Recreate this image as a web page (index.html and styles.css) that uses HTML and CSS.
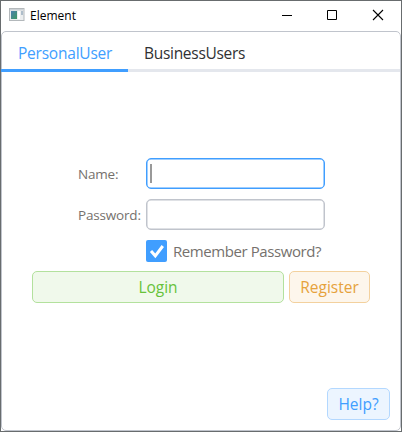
FILE: index.html
```
<!DOCTYPE html>
<html lang="en">
<head>
<meta charset="utf-8">
<title>Element</title>
<link rel="stylesheet" href="styles.css">
</head>
<body>
<div class="window">
  <header class="titlebar">
    <svg class="app-icon" width="16" height="14" viewBox="0 0 16 14">
      <defs>
        <linearGradient id="pane" x1="0" y1="0" x2="1" y2="1"><stop offset="0" stop-color="#4d7fb0"/><stop offset="1" stop-color="#3f9a62"/></linearGradient>
      </defs>
      <rect x=".5" y=".5" width="14.500" height="12" fill="#eceeef" stroke="#b3b8bb"/>
      <rect x="1" y="1" width="14" height="1.5" fill="#cdd2d6"/>
      <rect x="2" y="3" width="6" height="8" fill="url(#pane)"/>
      <rect x="9" y="3" width="2" height="8" fill="#fff"/>
      <rect x="12" y="3" width="2" height="4" fill="#aebdca"/>
    </svg>
    <span class="title">Element</span>
    <svg class="controls" width="102" height="12" viewBox="0 0 102 12">
      <path d="M0 6.500h10M45.500 1.500h9v9h-9z" fill="none" stroke="#000"/>
      <path d="M91 1l10 10M101 1l-10 10" fill="none" stroke="#000" stroke-width="1.1"/>
    </svg>
  </header>
  <main class="panel">
    <nav class="tabs">
      <a class="tab tab-active"><span class="t-personal">PersonalUser</span></a>
      <a class="tab"><span class="t-business">BusinessUsers</span></a>
    </nav>
    <form class="form">
      <div class="field"><label class="label t-name">Name:</label><div class="input input-focus"><i class="caret"></i></div></div>
      <div class="field"><label class="label t-pass">Password:</label><div class="input"></div></div>
      <div class="remember">
        <svg class="check" width="21" height="22" viewBox="0 0 21 22"><rect width="21" height="22" rx="2" fill="#409eff"/><path d="M5 11l4.300 4.800L16.800 6" fill="none" stroke="#fff" stroke-width="3"/></svg>
        <span class="t-remember">Remember Password?</span>
      </div>
      <div class="actions">
        <div class="button login"><span class="t-login">Login</span></div>
        <div class="button register"><span class="t-register">Register</span></div>
      </div>
    </form>
    <footer class="footer"><div class="button help"><span class="t-help">Help?</span></div></footer>
  </main>
</div>
</body>
</html>
```
FILE: styles.css
```
* { box-sizing: border-box; }
body { margin: 0; font-family: "Open Sans", "Noto Sans", sans-serif; font-size: 15.5px; color: #75716d; }
.window { width: 402px; height: 432px; border: 1px solid #686c6e; background: #fff; display: flex; flex-direction: column; overflow: hidden; }
span, label { white-space: nowrap; }
.titlebar { height: 30px; flex: none; display: flex; align-items: center; padding: 0 17px 2px 8px; }
.title { margin: 2px 0 0 5px; font-size: 12px; line-height: 16px; color: #000; }
.controls { margin-left: auto; }
.panel { flex: 1; border: 1px solid #c0c4cc; border-radius: 5px; display: flex; flex-direction: column; }
.tabs { height: 40px; flex: none; display: flex; border-bottom: 3px solid #e4e7ed; margin-left: -1px; }
.tab { height: 40px; padding: 3px 16px 0; line-height: 37px; font-size: 15.5px; color: #303133; }
.tab-active { width: 127px; padding-left: 17px; color: #409eff; border-bottom: 3px solid #409eff; }
.t-personal { letter-spacing: -.22px; }
.t-business { letter-spacing: -.29px; }
.form { margin: 86px 0 0 30px; width: 338px; }
.field { display: flex; align-items: center; height: 31px; margin: 0 0 10px 46px; }
.label { width: 68px; font-size: 13.5px; letter-spacing: -.18px; }
.input { width: 179px; height: 31px; border: 1px solid #c0c4cc; border-radius: 5px; box-shadow: inset 0 0 0 .5px #c0c4cc; padding: 5px 3px; }
.input-focus { border-color: #409eff; box-shadow: inset 0 0 0 .5px #409eff; }
.caret { display: block; width: 2px; height: 19px; background: #999; }
.remember { display: flex; align-items: center; height: 22px; margin-left: 114px; gap: 6px; }
.check { flex: none; }
.t-remember { font-size: 15px; letter-spacing: -.42px; }
.actions { display: flex; gap: 5px; margin-top: 9px; }
.button { height: 32px; border: 1px solid; border-radius: 5px; display: flex; align-items: center; justify-content: center; }
.login { width: 252px; background: #f0f9eb; border-color: #b3e19d; color: #67c23a; }
.register { width: 81px; background: #fdf6ec; border-color: #f3d19e; color: #e6a23c; }
.footer { margin-top: auto; display: flex; justify-content: flex-end; padding: 0 10px 10px; }
.help { width: 63px; background: #ecf5ff; border-color: #b3d8ff; color: #409eff; }
```
